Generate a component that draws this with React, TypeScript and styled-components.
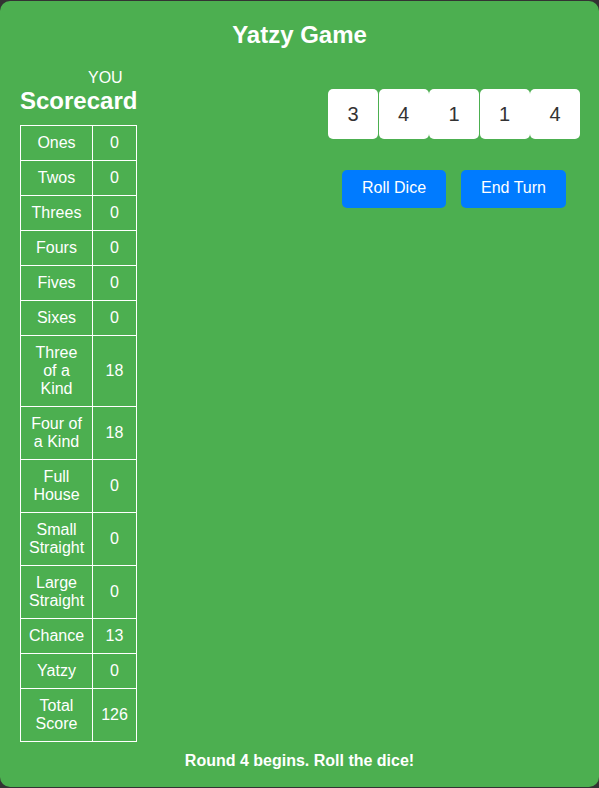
import React from 'react';
import styled, { createGlobalStyle } from 'styled-components';

const GlobalStyle = createGlobalStyle`
  html, body {
    margin: 0;
    padding: 0;
    background: #333333;
  }
  body {
    font-family: "Liberation Sans", Arial, sans-serif;
    padding-top: 1px;
  }
`;

const rows: { label: string; score: number }[] = [
  { label: 'Ones', score: 0 },
  { label: 'Twos', score: 0 },
  { label: 'Threes', score: 0 },
  { label: 'Fours', score: 0 },
  { label: 'Fives', score: 0 },
  { label: 'Sixes', score: 0 },
  { label: 'Three of a Kind', score: 18 },
  { label: 'Four of a Kind', score: 18 },
  { label: 'Full House', score: 0 },
  { label: 'Small Straight', score: 0 },
  { label: 'Large Straight', score: 0 },
  { label: 'Chance', score: 13 },
  { label: 'Yatzy', score: 0 },
  { label: 'Total Score', score: 126 },
];

const dice = [3, 4, 1, 1, 4];

const App = () => {
  return (
    <>
      <GlobalStyle />
      <GameContainer>
        <Title>Yatzy Game</Title>
        <Board>
          <ScoreColumn>
            <PlayerName>YOU</PlayerName>
            <ScoreTitle>Scorecard</ScoreTitle>
            <ScoreTable>
              <colgroup>
                <col style={{ width: 72 }} />
                <col />
              </colgroup>
              <tbody>
                {rows.map((row) => (
                  <tr key={row.label}>
                    <Cell>{row.label}</Cell>
                    <Cell>{row.score}</Cell>
                  </tr>
                ))}
              </tbody>
            </ScoreTable>
          </ScoreColumn>

          <PlayArea>
            <DiceRow>
              {dice.map((value, i) => (
                <Die key={i}>{value}</Die>
              ))}
            </DiceRow>
            <Controls>
              <ActionButton>Roll Dice</ActionButton>
              <ActionButton>End Turn</ActionButton>
            </Controls>
          </PlayArea>
        </Board>
        <Message>Round 4 begins. Roll the dice!</Message>
      </GameContainer>
    </>
  );
};

const GameContainer = styled.div`
  background: #4caf50;
  color: #ffffff;
  border-radius: 10px;
  padding: 20px;
  height: 786px;
  box-sizing: border-box;
`;

const Title = styled.h1`
  margin: 0 0 20px;
  font-size: 24px;
  font-weight: 700;
  text-align: center;
  line-height: 27px;
`;

const Board = styled.div`
  display: flex;
  justify-content: space-between;
  align-items: flex-start;
`;

const ScoreColumn = styled.div`
  display: flex;
  flex-direction: column;
  width: 117px;
`;

const PlayerName = styled.div`
  font-size: 16px;
  line-height: 18px;
  padding-left: 68px;
  margin-top: 1px;
`;

const ScoreTitle = styled.h2`
  margin: 0 0 10px;
  font-size: 24px;
  font-weight: 700;
  line-height: 28px;
  white-space: nowrap;
`;

const ScoreTable = styled.table`
  width: 117px;
  border-collapse: collapse;
  table-layout: fixed;
`;

const Cell = styled.td`
  border: 1px solid #ffffff;
  padding: 8px;
  font-size: 16px;
  line-height: 18px;
  text-align: center;
`;

const PlayArea = styled.div`
  display: flex;
  flex-direction: column;
  align-items: center;
  margin-top: 21px;
  margin-right: -1px;
`;

const DiceRow = styled.div`
  display: flex;
  gap: 0.5px;
`;

const Die = styled.div`
  width: 50px;
  height: 50px;
  background: #ffffff;
  color: #333333;
  border-radius: 5px;
  display: flex;
  align-items: center;
  justify-content: center;
  font-size: 20px;
`;

const Controls = styled.div`
  display: flex;
  gap: 15px;
  margin-top: 31px;
`;

const ActionButton = styled.button`
  background: #007bff;
  color: #ffffff;
  border: none;
  border-radius: 5px;
  padding: 9px 20px 11px;
  font-family: "Liberation Sans", Arial, sans-serif;
  font-size: 16px;
  line-height: 18px;
  cursor: pointer;
`;

const Message = styled.p`
  margin: 10px 0 0;
  font-size: 16px;
  font-weight: 700;
  line-height: 18px;
  text-align: center;
`;

export default App;
